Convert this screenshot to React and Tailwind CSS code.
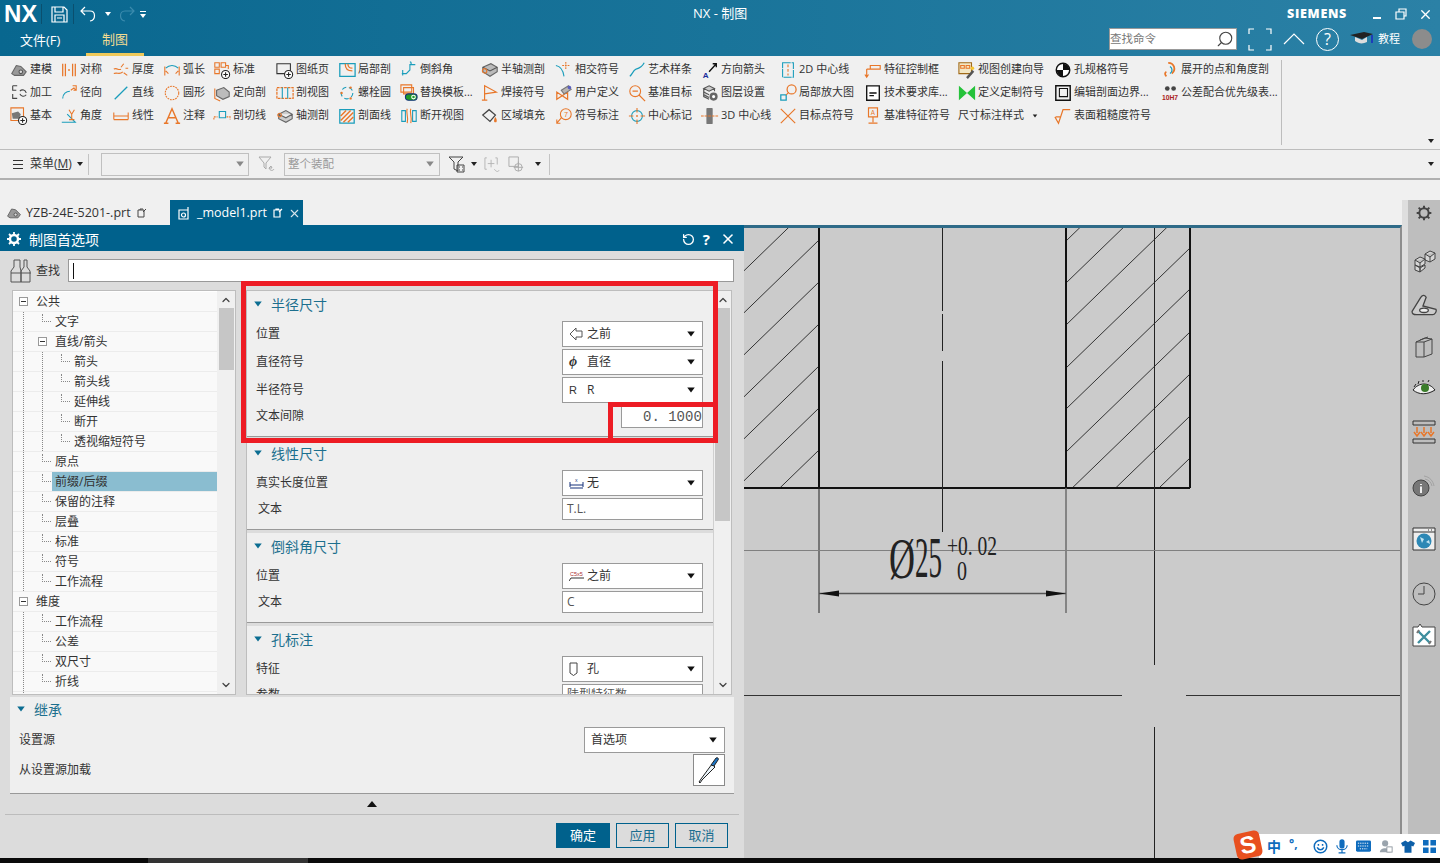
import React from "react";
import { ChevronUp, ChevronDown, Search, X, RotateCw } from "lucide-react";

const o = "#e8772a";
const t = "#1a9dbb";

const Svg = ({ children, size = 20, box = 20, className = "" }) => (
  <svg viewBox={`0 0 ${box} ${box}`} width={size} height={size} fill="none" strokeWidth="1.2" className={`shrink-0 ${className}`}>
    {children}
  </svg>
);

const Plus = () => (
  <g>
    <circle cx="14" cy="15" r="4.5" fill="#fff" stroke="#222" />
    <path d="M11.5 15h5M14 12.5v5" stroke="#222" />
  </g>
);

// ribbon icons
const icons = {
  model: <><path d="M2 14l5-9 5 1 6 6-3 4H5z" fill="#999" stroke="#666" /><circle cx="12" cy="12" r="2" fill="#ddd" stroke="#555" /></>,
  sym: <path d="M3 3v14M6 3v14M9 10h2M14 3v14M17 3v14" stroke={o} strokeWidth="1.4" />,
  thick: <path d="M2 9c4-2 5 2 8 0M2 14c4-2 6 2 10-2M13 3l-3 4M15 8h3M13 13l4 3" stroke={o} />,
  arc: <><path d="M3 8c4-4 10-4 14 0" stroke={t} /><path d="M2 6v10M18 6v10M3 11l3 3M17 11l-3 3" stroke={o} /></>,
  std: <><path d="M2 2h5v5H2zM9 2h5v5H9zM2 9h5v5H2zM14 5h3v4" stroke={o} /><Plus /></>,
  sheet: <><path d="M1 3h15v11H1z" stroke="#333" /><Plus /></>,
  local: <><path d="M2 3h17v14H2z" stroke={t} strokeWidth="1.4" /><path d="M8 3c0 5 3 8 8 8M11 3c0 3 2 5 5 5" stroke={o} strokeWidth="1.4" /></>,
  chamfer: <path d="M2 14h5l4-4V4h6M11 1c2 0 2 3 0 3M3 10v6" stroke={t} />,
  machine: <><path d="M3 2h5M3 2v5h4M3 11v5h5" stroke="#444" /><path d="M11 8a4 4 0 0 1 7 2M18 12a4 4 0 0 1-7-1" stroke="#444" /></>,
  radial: <><path d="M3 16c0-5 4-8 8-8" stroke={t} /><path d="M12 7l4-3M14 2h4v5h-3M15 4l3 3" stroke={o} /></>,
  line: <path d="M3 17L17 3" stroke={t} strokeWidth="1.4" />,
  circle: <circle cx="10" cy="10" r="7.5" stroke={o} strokeDasharray="2 1" />,
  orient: <><path d="M4 7l8-3 6 5v5l-7 3-7-4z" fill="#bbb" stroke="#666" /><path d="M2 5v11l6 3" stroke={o} /></>,
  secview: <><path d="M1 4h18v12H1z" stroke={o} strokeDasharray="3 1" strokeWidth="1.4" /><path d="M7 4v12M13 4v12" stroke={t} /></>,
  bolt: <><circle cx="10" cy="10" r="6.5" stroke={t} strokeDasharray="5 3" /><circle cx="4" cy="10" r="1.3" fill={o} /><circle cx="14" cy="4" r="1.3" fill={o} /><circle cx="14" cy="16" r="1.3" fill={o} /></>,
  tmpl: <><path d="M1 1h12v8H1zM4 4h11v7H4z" stroke={o} /><rect x="6" y="11" width="13" height="7" rx="3.5" fill="#1e9b28" stroke="#137" /><circle cx="15" cy="14.5" r="2" stroke="#fff" /></>,
  base: <><path d="M1 1h14v14H1z" stroke={o} /><path d="M2 7l7-2 3 3-2 5H3z" fill="#777" /><Plus /></>,
  angle: <><path d="M2 17h15L8 8" stroke={t} /><path d="M10 3l3 5 3-5M13 8v6M10 14h6" stroke={o} /></>,
  linear: <path d="M2 6v8M18 6v8M2 10h16M2 14h16" stroke={o} />,
  note: <path d="M3 18L10 2l7 16M6 12h8M1 18h5M14 18h5" stroke={o} strokeWidth="1.6" />,
  cut: <><path d="M7 5h7v7H7z" stroke={t} /><path d="M1 14v-3h4M15 11h4v3" stroke={o} strokeDasharray="2 1" /></>,
  iso: <><path d="M3 8l8-4 7 4-7 4zM3 8v5l8 4 7-4V8" fill="#ccc" stroke="#666" /><circle cx="4" cy="9" r="2" stroke={o} /></>,
  hatch: <><path d="M2 3h16v15H2z" stroke={t} strokeWidth="1.4" /><path d="M3 10l6-6M3 15l11-11M6 17l11-11M11 17l6-6" stroke={o} strokeWidth="1.6" /></>,
  brk: <><path d="M2 4h4v12H2zM14 4h4v12h-4z" stroke={t} /><path d="M8 2c-2 5 2 8 0 16M12 2c-2 5 2 8 0 16" stroke={o} /></>,
  semi: <><path d="M2 7l9-4 7 4v5l-8 5-8-5z" fill="#bbb" stroke="#666" /><path d="M2 7l8 4 8-4" stroke="#555" /><circle cx="4" cy="11" r="2.5" stroke={o} /></>,
  inter: <><path d="M1 5c6 1 8 5 9 12" stroke={t} /><path d="M12 1v8M8 5h8" stroke={o} strokeDasharray="2 1" /></>,
  spline: <path d="M2 17c3-2 3-6 7-8 4-1 7-3 9-7" stroke={t} strokeWidth="1.3" />,
  dir: <><path d="M9 12l8-9M13 3h4v4" stroke="#111" strokeWidth="1.5" /><text x="2" y="19" fontSize="9" fontWeight="bold" fill="#1a2c9b" fontFamily="Liberation Sans">A</text></>,
  weld: <path d="M4 18V2l13 7-13 2M1 18h6" stroke={o} strokeWidth="1.3" />,
  user: <><path d="M2 17l6-4 6 4V9l-6 4-6-4z" stroke={o} strokeWidth="1.4" /><path d="M7 7l8-5 3 4-8 5z" fill="#b9b4b0" stroke="#777" /><circle cx="16" cy="4" r="2" fill="#5a60c0" /></>,
  target: <><circle cx="8" cy="8" r="6" stroke={o} /><path d="M5 8h6M12 12l7 7" stroke={o} strokeWidth="1.4" /></>,
  layer: <><path d="M3 5l6-3 6 3-6 3zM3 5v9l6 3M15 5v3" fill="#ccc" stroke="#555" /><path d="M3 9l6 3M3 12l6 3" stroke="#555" /><circle cx="14" cy="14" r="4.5" fill="#666" /><circle cx="14" cy="14" r="1.7" fill="#fff" /></>,
  fill: <><path d="M2 9l7-6 7 6-6 7z" stroke="#444" strokeWidth="1.4" /><path d="M16 11c-2 3-2 6 0 6s2-3 0-6" fill={o} /></>,
  balloon: <><circle cx="12" cy="8" r="6" stroke={o} /><path d="M7 12l-5 6M2 14v4h4" stroke={o} /><text x="10" y="11" fontSize="8" fill={o} fontFamily="Liberation Sans">7</text></>,
  center: <><circle cx="10" cy="10" r="6" stroke={t} /><circle cx="10" cy="10" r="1" fill={o} /><path d="M10 1v5M10 14v5M1 10h5M14 10h5" stroke={o} /></>,
  d3: <><rect x="6" y="1" width="7" height="18" rx="1" fill="#777" /><path d="M0 10h20" stroke={o} strokeDasharray="3 1" /></>,
  d2: <><path d="M4 2h12v16H4z" stroke={t} strokeDasharray="9 1" /><path d="M10 4v12" stroke={o} strokeDasharray="3 2" /></>,
  detail: <><circle cx="14" cy="6" r="5" stroke={o} strokeWidth="1.4" /><path d="M2 12h6v6H2z" stroke={t} strokeWidth="1.4" /><path d="M8 12l3-3" stroke={o} /></>,
  cross: <path d="M2 2l16 16M18 2L2 18" stroke={o} strokeWidth="1.3" />,
  fcf: <path d="M3 18v-9M1 15l2 3 2-3M3 9h4V5h11v4H7" stroke={o} strokeWidth="1.3" />,
  tech: <><path d="M3 2h14v16H3z" fill="#fff" stroke="#111" strokeWidth="1.5" /><path d="M6 10h8M6 13h5" stroke="#111" strokeWidth="1.4" /></>,
  datum: <><path d="M5 1h10v10H5zM10 11v6M5 18h10" stroke={o} strokeWidth="1.3" /><text x="7.5" y="9" fontSize="7" fill={o} fontFamily="Liberation Sans">A</text></>,
  wizard: <><path d="M1 2h14v12H1z" fill="#f3e7c4" stroke="#a06a18" /><path d="M3 5h4v3H3zM9 5h4v3H9z" stroke={o} /><path d="M9 18l7-8 2 2-7 8z" fill="#555" /><circle cx="16" cy="8" r="2" fill="#f4c430" /></>,
  custom: <path d="M1 2l9 8 9-8v16l-9-8-9 8z" fill="#25c23a" />,
  rough: <path d="M1 11l4 7 5-15h8M2 11h6" stroke={o} strokeWidth="1.3" />,
  hole: <><circle cx="10" cy="10" r="7.5" fill="#fff" stroke="#111" strokeWidth="1.6" /><path d="M10 3a7 7 0 0 1 7 7h-7zM10 17a7 7 0 0 1-7-7h7z" fill="#111" /></>,
  bound: <><path d="M2 2h16v16H2z" stroke="#111" strokeWidth="1.6" /><path d="M6 5h9v9H6z" stroke="#111" strokeWidth="1.2" /></>,
  unfold: <><path d="M8 2c7 0 9 8 4 12M6 17c-2-2-2-4 0-5" stroke={o} strokeWidth="2" /><path d="M10 6c3 2 3 6 0 8" stroke={t} strokeWidth="1.4" /></>,
  fit: <><circle cx="7" cy="5" r="2.6" fill="#444" /><circle cx="14" cy="5" r="2.6" fill="#444" /><text x="1" y="18" fontSize="7.5" fontWeight="bold" fill="#a22" fontFamily="Liberation Sans">10H7</text></>,
};

const columns = [
  { w: "w-[50px]", items: [["model", "建模"], ["machine", "加工"], ["base", "基本"]] },
  { w: "w-[52px]", items: [["sym", "对称"], ["radial", "径向"], ["angle", "角度"]] },
  { w: "w-[51px]", items: [["thick", "厚度"], ["line", "直线"], ["linear", "线性"]] },
  { w: "w-[50px]", items: [["arc", "弧长"], ["circle", "圆形"], ["note", "注释"]] },
  { w: "w-[63px]", items: [["std", "标准"], ["orient", "定向剖"], ["cut", "剖切线"]] },
  { w: "w-[62px]", items: [["sheet", "图纸页"], ["secview", "剖视图"], ["iso", "轴测剖"]] },
  { w: "w-[62px]", items: [["local", "局部剖"], ["bolt", "螺栓圆"], ["hatch", "剖面线"]] },
  { w: "w-[81px]", items: [["chamfer", "倒斜角"], ["tmpl", "替换模板..."], ["brk", "断开视图"]] },
  { w: "w-[74px]", items: [["semi", "半轴测剖"], ["weld", "焊接符号"], ["fill", "区域填充"]] },
  { w: "w-[73px]", items: [["inter", "相交符号"], ["user", "用户定义"], ["balloon", "符号标注"]] },
  { w: "w-[73px]", items: [["spline", "艺术样条"], ["target", "基准目标"], ["center", "中心标记"]] },
  { w: "w-[78px]", items: [["dir", "方向箭头"], ["layer", "图层设置"], ["d3", "3D 中心线"]] },
  { w: "w-[85px]", items: [["d2", "2D 中心线"], ["detail", "局部放大图"], ["cross", "目标点符号"]] },
  { w: "w-[94px]", items: [["fcf", "特征控制框"], ["tech", "技术要求库..."], ["datum", "基准特征符号"]] },
  { w: "w-[96px]", items: [["wizard", "视图创建向导"], ["custom", "定义定制符号"], [null, "尺寸标注样式"]] },
  { w: "w-[107px]", items: [["hole", "孔规格符号"], ["bound", "编辑剖面边界..."], ["rough", "表面粗糙度符号"]] },
  { w: "w-[123px]", items: [["unfold", "展开的点和角度剖"], ["fit", "公差配合优先级表..."]] },
];

const Caret = ({ className = "" }) => (
  <span className={`inline-block w-0 h-0 border-x-[3.5px] border-x-transparent border-t-[4px] border-t-[#222] ${className}`} />
);

function TopBar() {
  return (
    <div className="h-[56px] shrink-0 bg-gradient-to-r from-[#08678f] via-[#19749a] to-[#2b81a6] text-white flex flex-col">
      <div className="h-[28px] flex items-center relative">
        <span className="ml-[4px] w-[32px] text-[24px] leading-none font-bold font-['Liberation_Sans',sans-serif]">NX</span>
        <span className="ml-[5px] w-px h-[20px] bg-[#0a4f6e]" />
        <svg viewBox="0 0 17 17" width="17" height="17" fill="none" stroke="#fff" strokeWidth="1.2" className="ml-[9px]">
          <path d="M1 1h12l3 3v12H1zM4 1v5h8V1M4 16v-7h9v7M6 12h5" />
        </svg>
        <span className="ml-[5px] w-px h-[20px] bg-[#0a4f6e]" />
        <svg viewBox="0 0 17 17" width="17" height="17" fill="none" stroke="#fff" strokeWidth="1.2" className="ml-[6px]">
          <path d="M5 1L1 5l4 4M1 5h9c6 0 6 9 0 10" />
        </svg>
        <Caret className="ml-[8px] !border-t-white" />
        <svg viewBox="0 0 17 17" width="17" height="17" fill="none" stroke="#3b8bad" strokeWidth="1.2" className="ml-[7px]">
          <path d="M12 1l4 4-4 4M16 5H7c-6 0-6 9 0 10" />
        </svg>
        <span className="ml-[5px] flex flex-col items-center gap-[2px]">
          <span className="w-[6px] h-px bg-white" />
          <Caret className="!border-t-white" />
        </span>
        <span className="absolute left-[693px] text-[13px]">NX - 制图</span>
        <span className="ml-auto mr-[26px] text-[12.5px] font-extrabold tracking-[0.7px] font-['Open_Sans',sans-serif]">SIEMENS</span>
        <span className="w-[8px] h-[2px] bg-white mt-[8px]" />
        <svg viewBox="0 0 12 12" width="12" height="12" fill="none" stroke="#fff" strokeWidth="1.2" className="ml-[14px]">
          <path d="M1 4h8v7H1zM4 4V1h7v7H9" />
        </svg>
        <X size={15} strokeWidth={2.2} className="ml-[11px] mr-[7px]" />
      </div>
      <div className="h-[28px] flex items-stretch relative">
        <span className="ml-[20px] w-[66px] text-[13px] flex items-center pb-[2px]">文件(F)</span>
        <span className="w-[58px] text-[13px] text-[#f3dc92] flex items-center justify-center pb-[2px] border-b-[3px] border-[#efc95a]">制图</span>
        <div className="ml-auto flex items-center pb-[6px] pr-[8px]">
          <div className="w-[128px] h-[22px] bg-white border border-[#999] flex items-center justify-between text-[11.5px] text-[#777] pr-[2px]">
            <span>查找命令</span>
            <Search size={18} strokeWidth={1.5} color="#444" className="-scale-x-100" />
          </div>
          <svg viewBox="0 0 24 23" width="24" height="23" fill="none" stroke="#fff" strokeWidth="1.2" className="ml-[11px]">
            <path d="M1 6V1h5M18 1h5v5M1 17v5h5M23 17v5h-5" />
          </svg>
          <svg viewBox="0 0 22 12" width="22" height="12" fill="none" stroke="#fff" strokeWidth="1.2" className="ml-[11px]">
            <path d="M1 11L11 1l10 10" />
          </svg>
          <span className="ml-[11px] w-[23px] h-[23px] rounded-full border border-white flex items-center justify-center text-[16px] leading-none">?</span>
          <svg viewBox="0 0 24 16" width="24" height="16" className="ml-[11px]">
            <path d="M0 4l14-3 9 2-11 5z" fill="#222" />
            <path d="M5 6v4c4 3 8 3 12 1V6l-5 3z" fill="#ddd" />
            <path d="M22 4v8" stroke="#1a2cc0" strokeWidth="1.6" />
          </svg>
          <span className="ml-[4px] text-[11px]">教程</span>
          <span className="ml-[12px] w-[20px] h-[20px] rounded-full bg-[#8c8c8c]" />
        </div>
      </div>
    </div>
  );
}

function Ribbon() {
  return (
    <div className="h-[94px] shrink-0 bg-[#f0f0f0] border-b border-[#bdbdbd] flex pl-[10px] pt-[2px] relative text-[11px] text-[#333]">
      {columns.map((col, i) => (
        <div key={i} className={`${col.w} shrink-0 flex flex-col`}>
          {col.items.map(([icon, label]) => (
            <div key={label} className="h-[23px] flex items-center whitespace-nowrap">
              {icon && <Svg size={18} className="mr-[2px]">{icons[icon]}</Svg>}
              {label}
              {!icon && <Caret className="ml-[8px] scale-75" />}
            </div>
          ))}
        </div>
      ))}
      <span className="w-px h-[85px] bg-[#bdbdbd] mt-[2px] ml-[-3px]" />
      <Caret className="absolute right-[6px] bottom-[6px]" />
    </div>
  );
}

function Toolbar() {
  return (
    <div className="h-[30px] shrink-0 bg-[#f0f0f0] border-b-2 border-[#b0b0b0] flex items-center text-[12px] text-[#333]">
      <span className="ml-[13px] w-[10px] flex flex-col gap-[3px]">
        <span className="h-px bg-[#333]" />
        <span className="h-px bg-[#333]" />
        <span className="h-px bg-[#333]" />
      </span>
      <span className="ml-[7px]">菜单(<span className="underline">M</span>)</span>
      <Caret className="ml-[5px]" />
      <span className="ml-[5px] w-px h-[21px] bg-[#c4c4c4]" />
      <div className="ml-[12px] w-[148px] h-[23px] border border-[#c0c0c0] flex items-center justify-end pr-[5px]">
        <Caret className="!border-t-[#888] scale-125" />
      </div>
      <svg viewBox="0 0 18 18" width="18" height="18" fill="none" stroke="#aaa" className="ml-[9px]">
        <path d="M1 2h12L8 8v6l-2-2V8zM11 13l2-2 1 2h-3c1 3 4 3 5 1" />
      </svg>
      <div className="ml-[8px] w-[156px] h-[23px] border border-[#c0c0c0] flex items-center justify-between px-[3px] text-[11.5px] text-[#999]">
        整个装配
        <Caret className="!border-t-[#888] scale-125 mr-[3px]" />
      </div>
      <svg viewBox="0 0 18 18" width="18" height="18" fill="none" stroke="#444" className="ml-[8px]">
        <path d="M1 2h14l-5 5v9l-4-2V7zM9 10h7v7H9zM11 12h1M14 12h1M11 15h1M14 15h1" />
      </svg>
      <Caret className="ml-[5px]" />
      <svg viewBox="0 0 18 18" width="17" height="17" fill="none" stroke="#b5b5b5" className="ml-[7px]">
        <path d="M3 2H1v12h2M12 2h2v7M4 8h7M7.5 4v8M11 14c2 3 4 3 5 1" />
      </svg>
      <svg viewBox="0 0 18 18" width="17" height="17" fill="none" stroke="#aaa" className="ml-[7px]">
        <path d="M1 1h10v10H1z" />
        <circle cx="11" cy="12" r="4" />
        <path d="M11 6v10M6 12h10" />
      </svg>
      <Caret className="ml-[10px]" />
      <span className="ml-[8px] w-px h-[21px] bg-[#c4c4c4]" />
      <Caret className="ml-auto mr-[6px]" />
    </div>
  );
}

function Tabs() {
  return (
    <div className="h-[25px] shrink-0 flex items-stretch text-[12.5px] text-[#333]">
      <div className="w-[170px] flex items-center pl-[6px] pt-[1px]">
        <Svg size={16}>{icons.model}</Svg>
        <span className="ml-[4px]">YZB-24E-5201-.prt</span>
        <svg viewBox="0 0 10 10" width="10" height="10" fill="none" stroke="#444" className="ml-[6px]">
          <path d="M1 2h6v7H1zM3 2V1h3M9 1L6 4" />
        </svg>
      </div>
      <div className="w-[133px] bg-[#00618c] text-white flex items-center pl-[8px] pt-[1px]">
        <svg viewBox="0 0 13 13" width="13" height="13" fill="none" stroke="#fff" strokeWidth="1.2">
          <path d="M1 3h9v9H1zM10 3V0" />
          <circle cx="5.5" cy="8" r="2" />
        </svg>
        <span className="ml-[6px]">_model1.prt</span>
        <svg viewBox="0 0 10 10" width="10" height="10" fill="none" stroke="#fff" strokeWidth="1.2" className="ml-[6px]">
          <path d="M1 2h6v7H1zM3 2V1h3M9 1L6 4" />
        </svg>
        <X size={13} className="ml-[5px] text-[#d5e4ec]" />
      </div>
    </div>
  );
}

// tree rows: guides = which outer levels keep a dotted line, kind = box or plain
const tree = [
  ["公共", [], "box"],
  ["文字", [1], "leaf"],
  ["直线/箭头", [1], "box"],
  ["箭头", [1, 1], "leaf"],
  ["箭头线", [1, 1], "leaf"],
  ["延伸线", [1, 1], "leaf"],
  ["断开", [1, 1], "leaf"],
  ["透视缩短符号", [1, 1], "leaf"],
  ["原点", [1], "leaf"],
  ["前缀/后缀", [1], "leaf", true],
  ["保留的注释", [1], "leaf"],
  ["层叠", [1], "leaf"],
  ["标准", [1], "leaf"],
  ["符号", [1], "leaf"],
  ["工作流程", [1], "leaf"],
  ["维度", [], "box"],
  ["工作流程", [1], "leaf"],
  ["公差", [1], "leaf"],
  ["双尺寸", [1], "leaf"],
  ["折线", [1], "leaf"],
  ["", [1], "leaf"],
];

function TreeRow({ label, guides, kind, selected }) {
  return (
    <div className="h-[20px] shrink-0 flex items-stretch bg-[#f9f9f9] border-b border-[#ececec] text-[#333]">
      {guides.map((_, i) => (
        <span key={i} className="w-[19px] shrink-0 pl-[10px]">
          <span className="block h-full border-l border-dotted border-[#888]" />
        </span>
      ))}
      <span className="w-[23px] shrink-0 pl-[6px] flex items-center">
        {kind === "box" ? (
          <span className="w-[9px] h-[9px] border border-[#999] bg-white flex items-center justify-center">
            <span className="w-[5px] h-px bg-[#333]" />
          </span>
        ) : (
          <span className="ml-[4px] w-[9px] h-[8px] border-l border-b border-dotted border-[#888] mb-[8px]" />
        )}
      </span>
      <span className={`flex-1 -ml-[3px] pl-[3px] flex items-center ${selected ? "bg-[#8abdd0]" : ""}`}>{label}</span>
    </div>
  );
}

function Scrollbar({ thumb, className }) {
  return (
    <div className={`flex flex-col items-center bg-[#f0f0f0] shrink-0 ${className}`}>
      <ChevronUp size={12} strokeWidth={2.5} color="#444" className="mt-[3px] mb-[2px] shrink-0" />
      <div className={`w-[15px] ${thumb} bg-[#c6c6c6] shrink-0`} />
      <ChevronDown size={12} strokeWidth={2.5} color="#444" className="mt-auto mb-[3px] shrink-0" />
    </div>
  );
}

function Select({ icon, label, w = "w-[141px]" }) {
  return (
    <div className={`${w} h-[26px] bg-white border border-[#9a9a9a] flex items-center pl-[6px] pr-[8px] text-[#333]`}>
      {icon && <span className="w-[18px] shrink-0 flex items-center">{icon}</span>}
      <span>{label}</span>
      <Caret className="ml-auto scale-125 !border-t-[#111]" />
    </div>
  );
}

function TextBox({ value, w = "w-[141px]", className = "" }) {
  return <div className={`${w} h-[22px] bg-white border border-[#9a9a9a] flex items-center px-[4px] text-[#555] overflow-hidden whitespace-nowrap ${className}`}>{value}</div>;
}

function Section({ title, children, last }) {
  return (
    <div className={`bg-[#efefef] ${last ? "" : "border-b border-[#999] mb-[3px] pb-[9px]"}`}>
      <div className="h-[26px] flex items-center pl-[8px] text-[14px] text-[#1c6f8e]">
        <Caret className="!border-t-[#0b6d92] scale-125 mr-[10px]" />
        {title}
      </div>
      <div className="mt-[4px] pl-[9px] pr-[10px] flex flex-col gap-[2px]">{children}</div>
    </div>
  );
}

function Row({ label, children, indent }) {
  return (
    <div className="flex items-center justify-between text-[#333]">
      <span className={indent ? "pl-[2px]" : ""}>{label}</span>
      {children}
    </div>
  );
}

const LeftArrow = (
  <svg viewBox="0 0 14 14" width="14" height="14" fill="none" stroke="#555">
    <path d="M7 1L1 7l6 6v-3h6V4H7z" />
  </svg>
);
const Phi = <span className="font-['Liberation_Serif',serif] italic font-bold text-[14px] leading-none">ϕ</span>;
const Rr = <span className="text-[11px] font-['Liberation_Sans',sans-serif]">R</span>;
const TrueLen = (
  <svg viewBox="0 0 15 12" width="15" height="12" fill="none" stroke="#14307a">
    <path d="M1 5v5M14 5v5M1 8h13M1 11h13" />
    <text x="6" y="5" fontSize="5" fill="#14307a" stroke="none">x</text>
  </svg>
);
const Chamfer = (
  <svg viewBox="0 0 16 12" width="16" height="12" fill="none" stroke="#333">
    <text x="1" y="6" fontSize="5.5" fill="#a33" stroke="none" fontFamily="Liberation Sans">C5x5</text>
    <path d="M0 11l2-3h13" />
  </svg>
);
const HoleIcon = (
  <svg viewBox="0 0 10 14" width="10" height="14" fill="none" stroke="#444">
    <path d="M1 1h7v10l-3.5 2.5L1 11z" />
  </svg>
);

function Dialog() {
  return (
    <div className="relative w-[744px] shrink-0 flex flex-col bg-[#dcdcdc] text-[12px]">
      <div className="h-[26px] shrink-0 bg-[#00618c] text-white flex items-center pl-[7px] pt-[2px] text-[14px]">
        <svg viewBox="0 0 14 14" width="14" height="14" fill="none" stroke="#fff" strokeWidth="2.4">
          <circle cx="7" cy="7" r="4" />
          <path d="M7 0v3M7 11v3M0 7h3M11 7h3M2 2l2 2M10 10l2 2M12 2l-2 2M2 12l2-2" strokeWidth="1.8" />
        </svg>
        <span className="ml-[8px]">制图首选项</span>
        <RotateCw size={13} strokeWidth={2.4} className="ml-auto -scale-x-100" />
        <span className="ml-[8px] text-[15px] font-bold leading-none">?</span>
        <X size={16} strokeWidth={2.4} className="ml-[10px] mr-[8px]" />
      </div>
      <div className="h-[39px] shrink-0 flex items-center pl-[10px] text-[#333]">
        <svg viewBox="0 0 24 24" width="24" height="24" fill="none" stroke="#555">
          <path d="M7 1h3v7l1 4v11H1V12l3-4V1zM14 1h3v7l3 4v11H11V12l3-4zM1 14h10M11 14h10" />
        </svg>
        <span className="ml-[2px] w-[32px]">查找</span>
        <div className="w-[666px] h-[23px] bg-white border border-[#999] flex items-center pl-[4px]">
          <span className="w-px h-[16px] bg-[#111]" />
        </div>
      </div>
      <div className="h-[405px] shrink-0 flex pl-[12px]">
        <div className="w-[224px] border border-[#bdbdbd] bg-white flex">
          <div className="flex-1 flex flex-col overflow-hidden pt-[1px]">
            {tree.map(([label, guides, kind, selected], i) => (
              <TreeRow key={i} label={label} guides={guides} kind={kind} selected={selected} />
            ))}
          </div>
          <Scrollbar thumb="h-[62px]" className="w-[18px]" />
        </div>
        <div className="ml-[10px] w-[486px] border border-[#bdbdbd] flex bg-[#dcdcdc]">
          <div className="w-[466px] shrink-0 overflow-hidden flex flex-col">
            <Section title="半径尺寸">
              <Row label="位置"><Select icon={LeftArrow} label="之前" /></Row>
              <Row label="直径符号"><Select icon={Phi} label="直径" /></Row>
              <Row label="半径符号"><Select icon={Rr} label="R" /></Row>
              <Row label="文本间隙">
                <TextBox value="0. 10000" w="w-[82px]" className="!pl-[21px] !pr-0 text-[14px] font-['Liberation_Mono',monospace] translate-y-px" />
              </Row>
            </Section>
            <Section title="线性尺寸">
              <Row label="真实长度位置"><Select icon={TrueLen} label="无" /></Row>
              <Row label="文本" indent><TextBox value="T.L." /></Row>
            </Section>
            <Section title="倒斜角尺寸">
              <Row label="位置"><Select icon={Chamfer} label="之前" /></Row>
              <Row label="文本" indent><TextBox value="C" /></Row>
            </Section>
            <Section title="孔标注" last>
              <Row label="特征"><Select icon={HoleIcon} label="孔" /></Row>
              <Row label="参数"><TextBox value="陡型特征数" /></Row>
            </Section>
          </div>
          <Scrollbar thumb="h-[213px]" className="flex-1 border-l border-[#d0d0d0]" />
        </div>
      </div>
      <div className="mt-[2px] ml-[10px] mr-[10px] h-[97px] shrink-0 bg-[#efefef] border-b border-[#999] text-[#333] flex flex-col">
        <div className="h-[24px] flex items-center pl-[8px] text-[14px] text-[#1c6f8e]">
          <Caret className="!border-t-[#0b6d92] scale-125 mr-[10px]" />
          继承
        </div>
        <div className="mt-[6px] flex items-center justify-between pl-[9px] pr-[9px]">
          <span>设置源</span>
          <Select label="首选项" />
        </div>
        <div className="mt-[1px] flex items-center justify-between pl-[9px] pr-[9px]">
          <span>从设置源加载</span>
          <div className="w-[32px] h-[32px] border border-[#8a8a8a] bg-white flex items-center justify-center">
            <svg viewBox="0 0 24 28" width="24" height="28" fill="none" stroke="#222">
              <path d="M5 24l-2 3-1-1 2-3L15 8l3 3z" fill="#eaf4fb" />
              <path d="M14 9l5-7c2-1 3 1 2 2l-4 6z" fill="#1c74c4" />
            </svg>
          </div>
        </div>
      </div>
      <div className="h-[21px] mx-[5px] shrink-0 border-b border-[#bcbcbc] flex items-center justify-center">
        <span className="w-0 h-0 border-x-[5px] border-x-transparent border-b-[6px] border-b-[#111]" />
      </div>
      <div className="flex-1 flex items-start justify-end gap-[6px] pt-[8px] pr-[16px] text-[13px]">
        <button className="w-[54px] h-[25px] bg-[#00618c] text-white">确定</button>
        <button className="w-[53px] h-[25px] border border-[#00618c] text-[#1a6e90]">应用</button>
        <button className="w-[53px] h-[25px] border border-[#00618c] text-[#1a6e90]">取消</button>
      </div>
      {/* red markup boxes over the dialog */}
      <div className="absolute left-[241px] top-[56px] w-[477px] h-[162px] border-[5px] border-[#ed1c24]" />
      <div className="absolute left-[608px] top-[177px] w-[110px] h-[41px] border-[5px] border-[#ed1c24]" />
    </div>
  );
}

function Drawing() {
  const left = [198, 240, 282, 324, 366, 408, 450];
  const right = [199, 241, 283, 325, 368, 409, 452, 494, 536, 578];
  return (
    <div className="flex-1 border-t-[3px] border-[#2f6b88] border-r-2 border-r-[#8e8e8e] bg-[#cbcbcb] relative">
      <svg viewBox="744 228 656 630" className="w-full h-full block" fill="none">
        <defs>
          <clipPath id="hl"><rect x="744" y="228" width="75" height="260" /></clipPath>
          <clipPath id="hr"><rect x="1066" y="228" width="124" height="260" /></clipPath>
        </defs>
        <g clipPath="url(#hl)" stroke="#333">
          {left.map(y => <line key={y} x1="819" y1={y} x2="719" y2={y + 97} />)}
        </g>
        <g clipPath="url(#hr)" stroke="#333">
          {right.map(y => <line key={y} x1="1066" y1={y} x2="1190" y2={y - 120} />)}
        </g>
        <path d="M819 228v260M1066 228v260M1190 228v260M744 488h446" stroke="#111" strokeWidth="2" />
        <path d="M819 488v125M1154.5 228v437M1154.5 727v131M942.5 228v83M942.5 314v37M942.5 361v171" stroke="#222" />
        <path d="M1066 488v125" stroke="#666" strokeWidth="1.4" />
        <path d="M744 550.5h656" stroke="#808080" />
        <path d="M744 695.5h378M1186 695.5h214" stroke="#333" />
        <path d="M819 593.5h247" stroke="#555" strokeWidth="1.4" />
        <path d="M819 593.5l20-3v6zM1066 593.5l-20-3v6z" fill="#111" />
        <g fill="#222" fontFamily="Liberation Serif, serif">
          <text x="889" y="578" fontSize="56" textLength="26" lengthAdjust="spacingAndGlyphs">Ø</text>
          <text x="915" y="577" fontSize="56" textLength="27" lengthAdjust="spacingAndGlyphs">25</text>
          <text x="947" y="555" fontSize="27" textLength="50" lengthAdjust="spacingAndGlyphs">+0. 02</text>
          <text x="957" y="580" fontSize="27" textLength="10" lengthAdjust="spacingAndGlyphs">0</text>
        </g>
      </svg>
    </div>
  );
}

function Rail() {
  const s = "#444";
  return (
    <div className="w-[38px] shrink-0 flex">
      <span className="w-[6px] bg-[#dedede]" />
      <div className="flex-1 bg-[#bebebe] flex flex-col items-center pt-[5px]">
        <svg viewBox="0 0 24 24" width="16" height="16" fill="none" stroke={s} strokeWidth="3">
          <circle cx="12" cy="12" r="7" />
          <path d="M12 1v4M12 19v4M1 12h4M19 12h4M4 4l3 3M17 17l3 3M20 4l-3 3M4 20l3-3" />
        </svg>
        <svg viewBox="0 0 24 24" width="24" height="24" fill="#d6d6d6" stroke={s} className="mt-[28px]">
          <path d="M13 5l5-3 5 2v6l-5 3-5-2zM13 5l5 3 5-4M18 8v5M3 11l5-3 5 2v5l-5 3-5-2zM3 11l5 3 5-4M8 14v4M3 16l5 3v4l-5-2zM8 19l5-3v3l-5 4z" />
        </svg>
        <svg viewBox="0 0 24 24" width="26" height="26" fill="#ccc" stroke={s} strokeWidth="1.2" className="mt-[20px]">
          <path d="M1 17L9 4c2-3 4-2 5 0l-3 8 12 3c1 2-1 5-3 5H5c-3 0-4-1-4-3z" />
          <ellipse cx="12" cy="16" rx="4" ry="2" fill="#eee" />
        </svg>
        <svg viewBox="0 0 24 24" width="24" height="24" fill="none" stroke={s} className="mt-[16px]">
          <path d="M4 7l9-4 7 1v15l-8 3H4zM4 7h8v15M12 7l8-3M8 5l8-3" />
        </svg>
        <svg viewBox="0 0 24 16" width="24" height="16" className="mt-[21px]">
          <path d="M1 10c6-8 16-8 22 0-8 5-16 5-22 0z" fill="#eee" stroke="#222" />
          <circle cx="13" cy="8" r="4" fill="#3a7d2a" />
          <path d="M2 7l2-3M6 4l1-3M11 2V0M16 2l1-2" stroke="#222" />
        </svg>
        <svg viewBox="0 0 24 24" width="24" height="24" fill="none" className="mt-[24px]">
          <path d="M1 1h22v4H1zM1 19h22v4H1z" stroke="#333" />
          <path d="M5 7v6M2 12l3 4 3-4M12 7v6M9 12l3 4 3-4M19 7v6M16 12l3 4 3-4" stroke={o} strokeWidth="1.5" />
        </svg>
        <svg viewBox="0 0 24 24" width="24" height="24" fill="none" className="mt-[30px]">
          <circle cx="9" cy="14" r="8" fill="#777" stroke="#444" />
          <path d="M9 10v1M9 12.5V19" stroke="#eee" strokeWidth="2" />
          <path d="M12 2c6 1 9 5 10 10M13 5c4 1 6 3 7 7" stroke="#a2a2a2" />
        </svg>
        <svg viewBox="0 0 24 24" width="24" height="24" className="mt-[29px]">
          <path d="M1 1h22v22H1z" fill="#eee" stroke="#333" />
          <path d="M1 5h22M16 3h1M19 3h1" stroke="#333" />
          <circle cx="12" cy="14" r="7.5" fill="#2d88b5" />
          <path d="M8 10l4 2-2 4zM14 15l3-2 1 4z" fill="#bfe3f2" />
        </svg>
        <svg viewBox="0 0 24 24" width="24" height="24" fill="none" stroke={s} className="mt-[31px]">
          <circle cx="12" cy="12" r="11" />
          <path d="M12 4v8H6" />
        </svg>
        <svg viewBox="0 0 24 24" width="24" height="24" className="mt-[17px]">
          <path d="M1 4h5l2-3 2 3h13v19H1z" fill="#fff" stroke="#444" />
          <path d="M6 8l12 12M18 8L6 20" stroke="#3e8e9e" strokeWidth="2.4" />
          <path d="M5 10l2-3M17 21l2-3" stroke="#777" strokeWidth="2" />
        </svg>
      </div>
    </div>
  );
}

function ImeBar() {
  const c = "#0f6cbd";
  return (
    <div className="absolute right-0 bottom-[5px] flex items-end">
      <span className="w-[26px] h-[26px] -mr-[2px] z-10 rounded-[5px] bg-[#e8501f] text-white font-bold text-[24px] leading-none -rotate-12 flex items-center justify-center font-['Liberation_Sans',sans-serif]">S</span>
      <div className="w-[181px] h-[24px] bg-white flex items-center pl-[8px] gap-[8px]">
        <span className="w-[14px] shrink-0 text-[14px] font-bold text-[#0f6cbd]">中</span>
        <span className="w-[16px] shrink-0 text-[12px] font-bold text-[#0f6cbd] -mt-[4px]">°,</span>
        <svg viewBox="0 0 18 18" width="15" height="15" fill="none" stroke={c} strokeWidth="1.8" className="shrink-0">
          <circle cx="9" cy="9" r="7.5" />
          <path d="M5 10c2 4 6 4 8 0M6.5 6v2M11.5 6v2" />
        </svg>
        <svg viewBox="0 0 14 18" width="12" height="16" className="shrink-0">
          <rect x="4" y="1" width="6" height="11" rx="3" fill={c} />
          <path d="M1 8c0 7 12 7 12 0M7 14v3M3 17h8" fill="none" stroke={c} strokeWidth="1.4" />
        </svg>
        <svg viewBox="0 0 16 12" width="15" height="12" className="shrink-0">
          <rect width="16" height="12" rx="1.5" fill={c} />
          <path d="M2 3h12M2 6h12M4 9h8" stroke="#fff" strokeDasharray="1.4 1" />
        </svg>
        <svg viewBox="0 0 16 16" width="14" height="14" className="shrink-0">
          <circle cx="7" cy="5" r="3.5" fill="#9aa4ad" />
          <path d="M1 15c0-6 12-6 12 0z" fill="#9aa4ad" />
          <rect x="9" y="9" width="6" height="6" fill="#fff" stroke="#8a949c" />
        </svg>
        <svg viewBox="0 0 16 14" width="14" height="13" className="shrink-0">
          <path d="M5 0l3 2 3-2 5 3-2 4-2-1v8H4V6L2 7 0 3z" fill="#0d5fa8" />
        </svg>
        <svg viewBox="0 0 14 14" width="13" height="13" fill={c} className="shrink-0">
          <path d="M0 0h6v6H0zM8 0h6v6H8zM0 8h6v6H0zM8 8h6v6H8z" />
        </svg>
      </div>
    </div>
  );
}

export default function App() {
  return (
    <div className="relative w-[1440px] h-[863px] overflow-hidden flex flex-col bg-[#f0f0f0] font-['Open_Sans','Noto_Sans_CJK_SC',sans-serif]">
      <TopBar />
      <Ribbon />
      <Toolbar />
      <div className="flex-1 min-h-0 flex pt-[20px]">
        <div className="flex-1 min-w-0 flex flex-col">
          <Tabs />
          <div className="flex-1 min-h-0 flex">
            <Dialog />
            <Drawing />
          </div>
        </div>
        <Rail />
      </div>
      <div className="h-[5px] shrink-0 bg-[#0a0a0a] flex">
        <span className="ml-[148px] w-[160px] bg-[#333]" />
      </div>
      <ImeBar />
    </div>
  );
}
